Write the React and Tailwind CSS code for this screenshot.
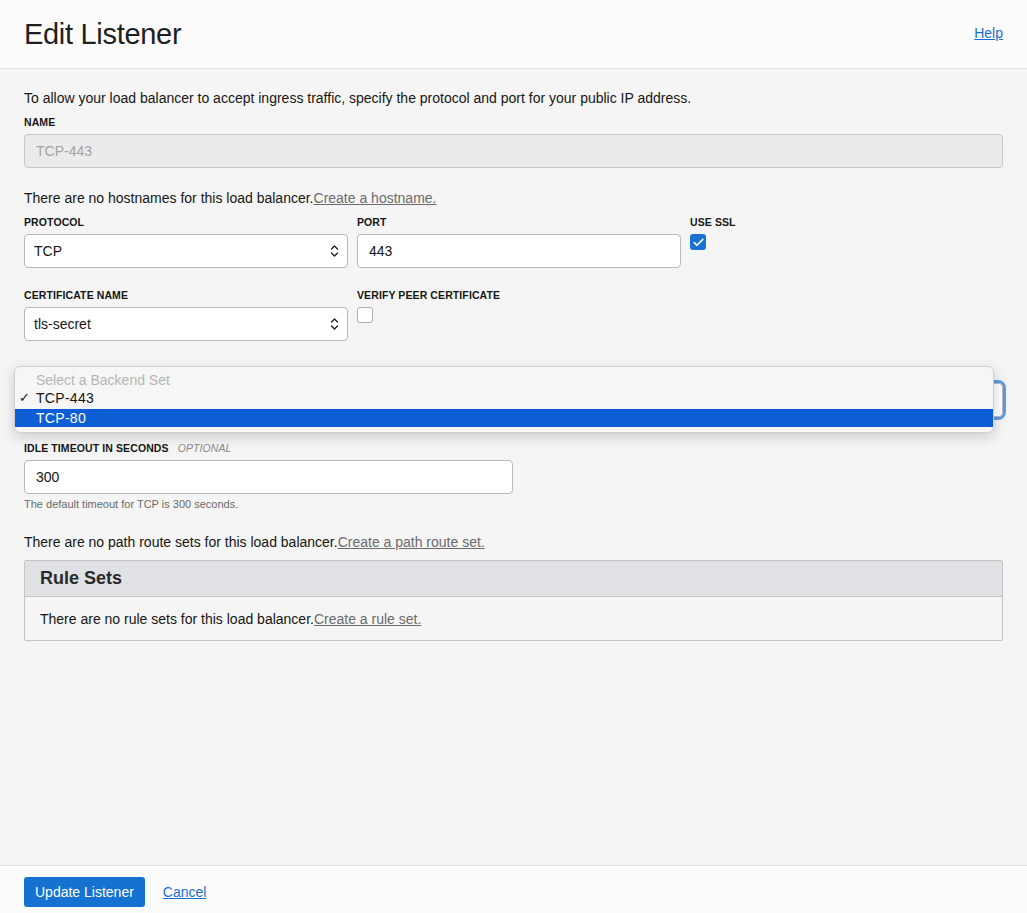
import React from 'react';

const font = { fontFamily: '"Liberation Sans", Arial, sans-serif' };

const Label = ({ children, optional, hidden }) => (
  <div className={`text-[10.5px] leading-[14px] font-semibold uppercase text-[#161513] mb-[5px] tracking-[0.1px] ${hidden ? 'invisible' : ''}`}>
    {children}
    {optional && <span className="ml-[9px] font-normal italic text-[#8a8a8a]">Optional</span>}
  </div>
);

const Chevrons = () => (
  <svg width="9" height="14" viewBox="0 0 9 14" className="absolute right-[8px] top-1/2 -translate-y-1/2">
    <path d="M1.5 5 L4.5 2 L7.5 5" fill="none" stroke="#222" strokeWidth="1.4" strokeLinecap="round" strokeLinejoin="round" />
    <path d="M1.5 9 L4.5 12 L7.5 9" fill="none" stroke="#222" strokeWidth="1.4" strokeLinecap="round" strokeLinejoin="round" />
  </svg>
);

const Select = ({ value, className = '' }) => (
  <div className={`relative h-[34px] bg-white border border-[#b8b8b8] rounded-[4px] flex items-center pl-[9px] text-sm text-[#161513] ${className}`}>
    {value}
    <Chevrons />
  </div>
);

const Input = ({ value, className = '' }) => (
  <div className={`h-[34px] bg-white border border-[#b8b8b8] rounded-[4px] flex items-center pl-[11px] text-sm text-[#161513] ${className}`}>
    {value}
  </div>
);

const Checkbox = ({ checked }) =>
  checked ? (
    <div className="w-[16px] h-[16px] rounded-[3px] bg-[#1a72d1] flex items-center justify-center">
      <svg width="11" height="9" viewBox="0 0 11 9">
        <path d="M1.2 4.6 L4 7.3 L9.8 1.4" fill="none" stroke="white" strokeWidth="1.6" strokeLinecap="round" strokeLinejoin="round" />
      </svg>
    </div>
  ) : (
    <div className="w-[16px] h-[16px] rounded-[3px] bg-white border border-[#b0b0b0]" />
  );

const EditListener = () => {
  return (
    <div className="h-screen flex flex-col bg-[#f5f5f5] text-[#161513]" style={font}>
      {/* Header */}
      <div className="h-[69px] shrink-0 bg-[#fcfcfc] border-b border-[#e3e3e3] flex items-start justify-between px-[24px]">
        <h1 className="mt-[17px] text-[29px] leading-[34px] font-normal tracking-[-0.3px] text-[#1f1f1f]">Edit Listener</h1>
        <a href="#" className="mt-[23px] text-sm text-[#1a6fd0] underline">Help</a>
      </div>

      {/* Body */}
      <div className="flex-1 px-[24px] pt-[19px]">
        <p className="text-sm leading-[20px]">
          To allow your load balancer to accept ingress traffic, specify the protocol and port for your public IP address.
        </p>

        <div className="mt-[7px]">
          <Label>Name</Label>
          <div className="h-[34px] bg-[#ebebeb] border border-[#c6c6c6] rounded-[4px] flex items-center pl-[11px] text-sm text-[#a3a3a3]">
            TCP-443
          </div>
        </div>

        <p className="mt-[20px] text-sm leading-[20px]">
          There are no hostnames for this load balancer.
          <a href="#" className="text-[#6b6b6b] underline">Create a hostname.</a>
        </p>

        <div className="mt-[7px] grid grid-cols-[324px_324px_1fr] gap-x-[9px]">
          <div>
            <Label>Protocol</Label>
            <Select value="TCP" />
          </div>
          <div>
            <Label>Port</Label>
            <Input value="443" />
          </div>
          <div>
            <Label>Use SSL</Label>
            <Checkbox checked />
          </div>
        </div>

        <div className="mt-[20px] grid grid-cols-[324px_324px_1fr] gap-x-[9px]">
          <div>
            <Label>Certificate Name</Label>
            <Select value="tls-secret" />
          </div>
          <div>
            <Label>Verify Peer Certificate</Label>
            <Checkbox />
          </div>
        </div>

        <div className="relative mt-[23px]">
          <Label hidden>Backend Set</Label>
          <div className="rounded-[5px] ring-[3px] ring-[#5b9be3]">
            <Select value="" className="border-[#3a7fd4]" />
          </div>

          {/* Open dropdown */}
          <div className="absolute left-[-10px] top-[2px] w-[980px] pt-[4px] pb-[5px] bg-[#f6f6f6] border border-[#cfcfcf] rounded-[6px] shadow-[0_4px_14px_rgba(0,0,0,0.18)] text-sm">
            <div className="h-[18px] leading-[18px] pl-[21px] text-[#b5b5b5]">Select a Backend Set</div>
            <div className="h-[18px] leading-[18px] pl-[21px] relative tracking-[0.3px]">
              <span className="absolute left-[4px] top-0 text-[13px]">✓</span>
              TCP-443
            </div>
            <div className="mt-[2px] h-[18px] leading-[18px] pl-[21px] bg-[#0d5ed5] text-white tracking-[0.3px]">TCP-80</div>
          </div>
        </div>

        <div className="mt-[24px]">
          <Label optional>Idle Timeout in Seconds</Label>
          <Input value="300" className="w-[489px]" />
          <p className="mt-[2px] text-[11px] leading-[16px] text-[#6b6b6b]">The default timeout for TCP is 300 seconds.</p>
        </div>

        <p className="mt-[20px] text-sm leading-[20px]">
          There are no path route sets for this load balancer.
          <a href="#" className="text-[#6b6b6b] underline">Create a path route set.</a>
        </p>

        <div className="mt-[8px] border border-[#c4c4c4] rounded-[2px]">
          <div className="h-[36px] bg-[#dfe1e4] border-b border-[#c4c4c4] flex items-center px-[15px]">
            <h2 className="text-[18px] font-semibold text-[#2a2a2a]">Rule Sets</h2>
          </div>
          <div className="h-[43px] flex items-center px-[15px] text-sm">
            There are no rule sets for this load balancer.
            <a href="#" className="text-[#6b6b6b] underline">Create a rule set.</a>
          </div>
        </div>
      </div>

      {/* Footer */}
      <div className="h-[48px] shrink-0 bg-[#fcfcfc] border-t border-[#e3e3e3] flex items-start pt-[11px] px-[24px] gap-[18px]">
        <button className="h-[30px] px-[11px] rounded-[3px] bg-[#1572d0] text-white text-sm">Update Listener</button>
        <a href="#" className="mt-[5px] text-sm text-[#1a6fd0] underline">Cancel</a>
      </div>
    </div>
  );
};

export default EditListener;
